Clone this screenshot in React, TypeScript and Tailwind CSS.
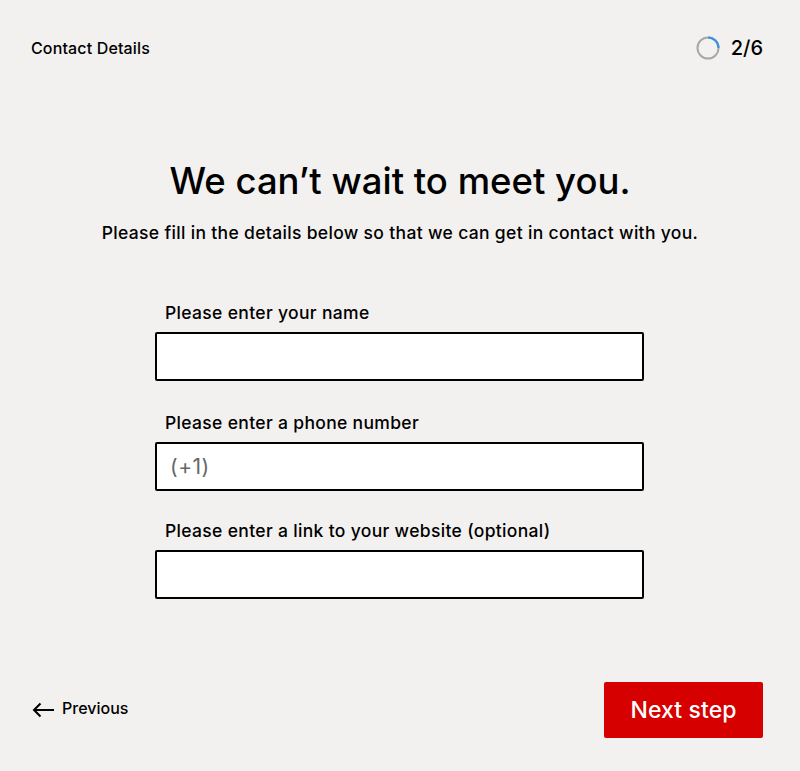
const font = "[font-family:'Inter','Liberation_Sans',sans-serif]";

function Field({ label, placeholder, mt }: { label: string; placeholder?: string; mt: string }) {
  return (
    <div className={`flex flex-col ${mt}`}>
      <label className="h-[24px] pl-[10px] text-[17.5px] leading-[24px] font-medium tracking-[0.33px] text-black">{label}</label>
      <div className="mt-[7px] flex h-[49px] items-center rounded-[2px] border-2 border-black bg-white px-[13px] text-[21px] tracking-[0.5px] text-[#666666]">
        {placeholder}
      </div>
    </div>
  );
}

export default function App() {
  return (
    <div className={`flex h-[771px] w-[800px] flex-col overflow-hidden bg-[#f2f1ef] text-black ${font}`}>
      <header className="flex h-[96px] items-center justify-between pr-[37px] pl-[31px]">
        <span className="text-[16px] leading-[24px] font-medium tracking-[0.14px]">Contact Details</span>
        <div className="flex items-center gap-[11px]">
          <svg width="24" height="24" viewBox="0 0 24 24" fill="none">
            <circle cx="12" cy="12" r="10.5" stroke="#a8a8a8" strokeWidth="2" />
            <path d="M12 1.5A10.5 10.5 0 0 1 22.5 12" stroke="#3d8fe0" strokeWidth="2" />
          </svg>
          <span className="text-[20px] leading-[24px] font-medium">2/6</span>
        </div>
      </header>

      <div className="mt-[61px] text-center">
        <h1 className="text-[36.5px] leading-[48px] font-medium">We can’t wait to meet you.</h1>
        <p className="mt-[15px] text-[17.5px] leading-[26px] font-medium tracking-[0.33px]">
          Please fill in the details below so that we can get in contact with you.
        </p>
      </div>

      <form className="mt-[55px] ml-[155px] w-[489px]">
        <Field label="Please enter your name" mt="mt-0" />
        <Field label="Please enter a phone number" placeholder="(+1)" mt="mt-[30px]" />
        <Field label="Please enter a link to your website (optional)" mt="mt-[28px]" />
      </form>

      <footer className="mt-[83px] flex items-center justify-between pr-[37px] pl-[32px]">
        <a className="mb-[4px] flex items-center gap-[8px] text-[16px] font-medium">
          <svg className="mt-[4px]" width="22" height="16" viewBox="0 0 22 16" fill="none" stroke="black" strokeWidth="2">
            <path d="M22 8H2M8.5 1.5L2 8l6.5 6.5" />
          </svg>
          Previous
        </a>
        <button className="h-[56px] w-[159px] rounded-[2px] bg-[#d60000] text-[23px] font-medium tracking-[0.1px] text-white">
          Next step
        </button>
      </footer>
    </div>
  );
}
